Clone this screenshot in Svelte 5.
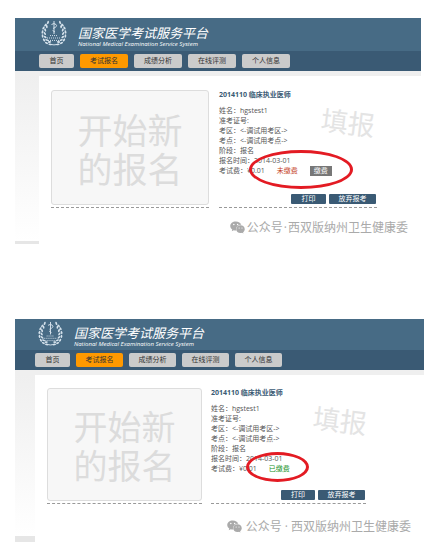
<script lang="ts">
  interface Screen {
    id: string;
    size: "large" | "small";
    amount: string;
    paid: boolean;
  }

  const tabs = ["首页", "考试报名", "成绩分析", "在线评测", "个人信息"];
  const activeTab = "考试报名";

  const fields = [
    { label: "姓名：", value: "hgstest1" },
    { label: "准考证号:", value: "" },
    { label: "考区：", value: "<-调试用考区->" },
    { label: "考点：", value: "<-调试用考点->" },
    { label: "阶段：", value: "报名" },
    { label: "报名时间：", value: "2014-03-01" },
  ];

  const screens: Screen[] = [
    { id: "unpaid", size: "large", amount: "¥0.01", paid: false },
    { id: "paid", size: "small", amount: "¥0.01", paid: true },
  ];

  // leaves of the left half of the wreath: x, y, angle
  const leaves = [
    [7, 2.5, 20], [4.5, 5, 40], [5.8, 6.5, -10], [2.5, 8, 30], [4.2, 10, -20],
    [1.5, 12, 15], [3.8, 13.5, -35], [1.6, 16, -5], [4.2, 17, -50],
    [3, 20, -30], [5.8, 20, -70], [5.5, 23, -60], [8.5, 22, -95], [9, 24.4, -80],
  ];
</script>

{#snippet emblem()}
  <svg class="emblem" viewBox="0 0 26 26" aria-hidden="true">
    {#each [1, -1] as side}
      <g transform={side === 1 ? "" : "translate(26 0) scale(-1 1)"}>
        {#each leaves as [x, y, angle]}
          <ellipse cx={x} cy={y} rx="0.9" ry="1.7" transform="rotate({angle} {x} {y})" />
        {/each}
      </g>
    {/each}
    <path class="emblem__line" d="M13 1V14M10.5 4.5Q13 2.5 15 4.5T12 8.5M11.6 10.5L14 12" />
    <path class="emblem__line emblem__line--dots" d="M9 15.6H17M6 18H20M7 20.4H19" />
    <path class="emblem__line" d="M9.5 24.4Q13 25.4 16.5 24.4" />
  </svg>
{/snippet}

{#snippet chat()}
  <svg class="chat" viewBox="0 0 30 26" aria-hidden="true">
    <path
      d="M11.5 1C5.2 1 .5 5 .5 10.1c0 2.9 1.5 5.3 4 7L3.5 20.5l4-2.1c1.3.4 2.5.6 4 .6h.8C10.7 12.5 15.5 7.600 22 7.600h.6C21.5 3.700 17 1 11.5 1z"
    />
    <path
      d="M29.5 16.3c0-4.200-4-7.600-8.500-7.600-4.900 0-8.600 3.400-8.600 7.600 0 4.300 3.700 7.600 8.600 7.600 1 0 2-.2 3-.5l3 1.800-.9-2.900c2-1.500 3.400-3.600 3.400-6z"
    />
    <g class="chat__eyes">
      <circle cx="7.6" cy="7" r="1.5" /><circle cx="15.2" cy="7" r="1.5" />
      <circle cx="18.3" cy="14" r="1.2" /><circle cx="24" cy="14" r="1.2" />
    </g>
  </svg>
{/snippet}

<main>
  {#each screens as screen (screen.id)}
    <section class="screen screen--{screen.size}">
      <header class="banner">
        {@render emblem()}
        <div>
          <h1 class="banner__title">国家医学考试服务平台</h1>
          <p class="banner__sub">National Medical Examination Service System</p>
        </div>
      </header>

      <nav class="tabs">
        {#each tabs as tab}
          <a class="tab" class:tab--active={tab === activeTab} href="#{screen.id}">{tab}</a>
        {/each}
      </nav>

      <div class="body">
        <div class="gutter"></div>
        <div class="panel">
          <div class="columns">
            <div class="cell">
              <button class="start" type="button">开始新<br />的报名</button>
            </div>

            <article class="cell details">
              <h2 class="details__title">2014110 临床执业医师</h2>
              <dl class="fields">
                {#each fields as field}
                  <div class="field">
                    <dt>{field.label}</dt>
                    <dd>{field.value}</dd>
                  </div>
                {/each}
                <div class="field">
                  <dt>考试费：</dt>
                  <dd class="fee">
                    <span>{screen.amount}</span>
                    {#if screen.paid}
                      <span class="fee__paid">已缴费</span>
                    {:else}
                      <span class="fee__due">未缴费</span>
                      <button class="fee__pay" type="button">缴费</button>
                    {/if}
                  </dd>
                </div>
              </dl>
              <div class="actions">
                <button class="action" type="button">打印</button>
                <button class="action action--wide" type="button">放弃报考</button>
              </div>
              <span class="stamp">填报</span>
              <span class="ring" class:ring--small={screen.paid}></span>
            </article>
          </div>

          <p class="account">
            {@render chat()}
            <span>公众号</span><span>·</span><span>西双版纳州卫生健康委</span>
          </p>
        </div>
      </div>
    </section>
  {/each}
</main>

<style>
  :global(body) {
    margin: 0;
    background: #fff;
  }
  main {
    padding: 18px 12px 15px 15px;
    display: flex;
    flex-direction: column;
    gap: 75px;
    font-family: "Open Sans", "Noto Sans CJK SC", sans-serif;
    font-size: 7px;
    line-height: 10px;
    color: #555;
  }
  h1,
  h2,
  p,
  dl,
  dd {
    margin: 0;
  }
  button {
    margin: 0;
    padding: 0;
    border: 0;
    font: inherit;
    cursor: pointer;
  }

  .screen--large {
    --banner-height: 33px;
    --banner-start: 26px;
    --emblem: 26px;
    --gutter: 24px;
    --foot: 3px;
    --tab: 48px;
    --tab-home: 35px;
    --card-top: 14px;
    --card-height: 115px;
    --column-gap: 10px;
    --panel-end: 44px;
    --start-size: 35px;
    --start-line: 39px;
    --account-height: 36px;
    --account-top: 3px;
    --account-gap: 1px;
    --action: 35px;
    margin-right: 3px;
  }
  .screen--small {
    --banner-height: 31px;
    --banner-start: 23px;
    --emblem: 25px;
    --gutter: 20px;
    --foot: 6px;
    --tab: 47px;
    --tab-home: 35px;
    --card-top: 13px;
    --card-height: 113px;
    --column-gap: 9px;
    --panel-end: 58px;
    --start-size: 34px;
    --start-line: 39px;
    --account-height: 38px;
    --account-top: 7px;
    --account-gap: 3px;
    --action: 34px;
  }

  .banner {
    display: flex;
    align-items: center;
    gap: 11px;
    height: var(--banner-height);
    padding-left: var(--banner-start);
    background: #476b85;
    color: #fff;
    font-style: italic;
    white-space: nowrap;
  }
  .emblem {
    width: var(--emblem);
    height: var(--emblem);
    margin-bottom: 3px;
    fill: #d5e2ec;
  }
  .emblem__line {
    fill: none;
    stroke: #d5e2ec;
    stroke-width: 1;
  }
  .emblem__line--dots {
    stroke-dasharray: 1 1;
  }
  .banner__title {
    padding-top: 4px;
    font-size: 13px;
    font-weight: 400;
    line-height: 15px;
  }
  .banner__sub {
    font-size: 6px;
    font-weight: 500;
    line-height: 6px;
  }

  .tabs {
    display: flex;
    align-items: center;
    gap: 6px;
    height: 20px;
    padding-left: var(--gutter);
    background: #3a5a74;
  }
  .tab {
    width: var(--tab);
    border-radius: 2px;
    background: #cbcbcb;
    color: #333;
    line-height: 14px;
    text-align: center;
    text-decoration: none;
  }
  .tab:first-child {
    width: var(--tab-home);
  }
  .tab--active {
    background: #f90;
  }

  .body {
    display: grid;
    grid-template-columns: var(--gutter) 1fr;
    padding-top: 5px;
    background: linear-gradient(#efefef 5px, transparent 5px);
  }
  .gutter {
    background: linear-gradient(#efefef, #fff);
    border-bottom: var(--foot) solid #e6e6e6;
  }
  .panel {
    padding: var(--card-top) 0 0 12px;
    background: #fff;
  }
  .columns {
    display: grid;
    grid-template-columns: 1fr 1fr;
    gap: var(--column-gap);
    padding-right: var(--panel-end);
  }
  .cell {
    padding-bottom: 2px;
    border-bottom: 1px dashed #999;
  }
  .start {
    box-sizing: border-box;
    display: block;
    width: 100%;
    height: var(--card-height);
    border: 1px solid #ddd;
    border-radius: 3px;
    background: #f7f7f7;
    color: #dcdcdc;
    font-family: "Noto Sans CJK SC", sans-serif;
    font-size: var(--start-size);
    font-weight: 400;
    line-height: var(--start-line);
  }

  .details {
    position: relative;
    display: flex;
    flex-direction: column;
    white-space: nowrap;
  }
  .details__title {
    color: #3a5a74;
    font-size: 7px;
    font-weight: 700;
  }
  .fields {
    padding-top: 6px;
  }
  .field {
    display: flex;
    height: 10px;
  }
  .fee {
    display: flex;
    gap: 12px;
  }
  .fee__due {
    color: #c43c1c;
  }
  .fee__paid {
    color: #14901c;
  }
  .fee__pay {
    width: 22px;
    background: #777;
    color: #fff;
  }
  .actions {
    display: flex;
    justify-content: flex-end;
    gap: 3px;
    margin-top: auto;
    padding: 0 1px 1px 0;
  }
  .action {
    width: var(--action);
    border-radius: 1px;
    background: #3a5a74;
    color: #fff;
  }
  .action--wide {
    width: 47px;
  }
  .stamp {
    position: absolute;
    top: 17px;
    left: 102px;
    color: #e4e4e4;
    font-size: 27px;
    line-height: 32px;
    transform: rotate(7deg);
  }
  .ring {
    position: absolute;
    top: 60px;
    left: 30px;
    box-sizing: border-box;
    width: 104px;
    height: 39px;
    border: 3px solid #e31b23;
    border-radius: 50%;
    pointer-events: none;
  }
  .ring--small {
    top: 64px;
    left: 35px;
    width: 63px;
    height: 30px;
  }

  .account {
    box-sizing: border-box;
    display: flex;
    align-items: center;
    justify-content: flex-end;
    gap: var(--account-gap);
    height: var(--account-height);
    padding: var(--account-top) 13px 0 0;
    color: #aaa;
    font-size: 12px;
    line-height: 16px;
    white-space: nowrap;
  }
  .chat {
    width: 15px;
    height: 13px;
    margin-right: 1px;
    fill: #aaa;
  }
  .chat__eyes {
    fill: #fff;
  }
</style>
